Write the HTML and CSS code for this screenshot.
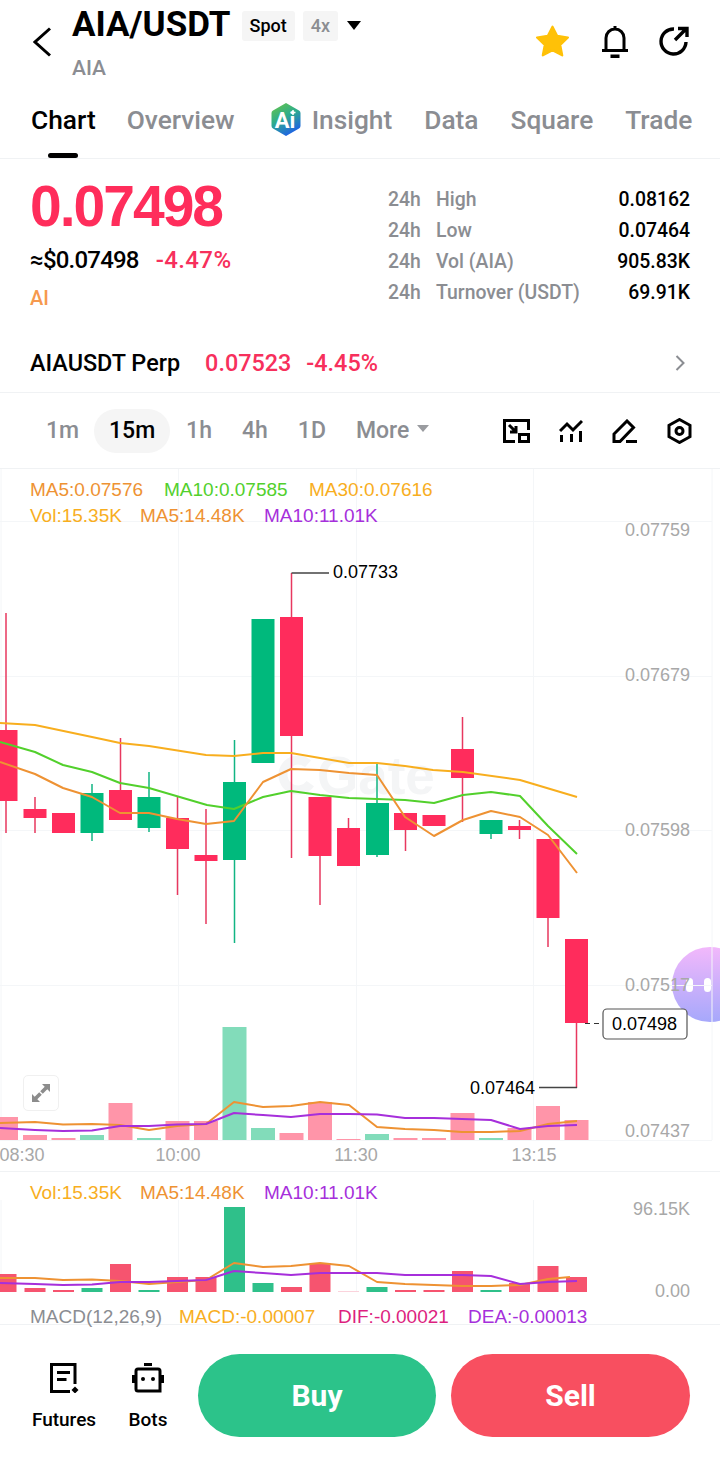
FILE: index.html
```html
<!DOCTYPE html>
<html lang="en">

<head>
  <meta charset="UTF-8">
  <meta name="viewport" content="width=device-width, initial-scale=1.0">
  <title>AIA/USDT</title>
  <link rel="stylesheet" href="styles.css">
</head>

<body>
  <div class="page">
    <header class="top">
      <svg class="back" width="20" height="30" viewBox="0 0 20 30"><path d="M17 1.500 2 15l15 13.500" /></svg>
      <div class="pair">
        <div class="pair-row">
          <h1>AIA/USDT</h1>
          <span class="tag">Spot</span>
          <span class="tag tag-grey">4x</span>
          <span class="caret"></span>
        </div>
        <div class="pair-sub">AIA</div>
      </div>
      <div class="top-icons">
        <svg class="star-icon" width="33" height="32" viewBox="2 1.500 30 29"><path class="star" d="M17 3 21.300 11.400 31 12.800 24 19.500 25.800 29 17 24.500 8.200 29 10 19.500 3 12.800 12.700 11.400Z" /></svg>
        <svg class="ico" width="28" height="33" viewBox="0 0 28 33"><path d="M14 1v3M5 25V13a9 9 0 0 1 18 0v12M1 25.500h26" /><path class="solid" d="M9.500 29.500h9V33h-9z" /></svg>
        <svg class="ico ico-share" width="30" height="30" viewBox="0 0 30 30"><path d="M15 3A12.500 12.500 0 1 0 27 16M16 14 27 3M19 2.500h9V11" /></svg>
      </div>
    </header>

    <nav class="tabs">
      <a class="tab active" href="#">Chart</a>
      <a class="tab" href="#">Overview</a>
      <a class="tab tab-insight" href="#">
        <svg width="32" height="35" viewBox="0 0 32 35">
          <defs>
            <linearGradient id="hex" x1="0" y1="0" x2="0.500" y2="1">
              <stop offset="0" stop-color="#6cc644" />
              <stop offset="0.500" stop-color="#2fae8a" />
              <stop offset="1" stop-color="#1f66e0" />
            </linearGradient>
          </defs>
          <path fill="url(#hex)" d="M16 1 29 8.500a3 3 0 0 1 1.500 2.500v13a3 3 0 0 1-1.500 2.500L16 34 3 26.500A3 3 0 0 1 1.500 24V11A3 3 0 0 1 3 8.500Z" />
          <text class="hex-text" x="15" y="26">Ai</text>
          <path class="hex-plus" d="M23 8v5M20.500 10.500h5" />
        </svg>
        Insight
      </a>
      <a class="tab" href="#">Data</a>
      <a class="tab" href="#">Square</a>
      <a class="tab" href="#">Trade</a>
    </nav>

    <section class="stats">
      <div class="stats-left">
        <div class="price">0.07498</div>
        <div class="price-sub"><span class="usd">≈$0.07498</span><span class="red">-4.47%</span></div>
        <div class="sector">AI</div>
      </div>
      <div class="stats-right">
        <span class="k">24h</span><span class="k">High</span><span class="v">0.08162</span>
        <span class="k">24h</span><span class="k">Low</span><span class="v">0.07464</span>
        <span class="k">24h</span><span class="k">Vol (AIA)</span><span class="v">905.83K</span>
        <span class="k">24h</span><span class="k">Turnover (USDT)</span><span class="v">69.91K</span>
      </div>
    </section>

    <section class="perp">
      <span class="perp-name">AIAUSDT Perp</span>
      <span class="red perp-price">0.07523</span>
      <span class="red">-4.45%</span>
      <svg class="perp-arrow" width="10" height="16" viewBox="0 0 10 16"><path d="M1.500 1 8.500 8l-7 7" /></svg>
    </section>

    <section class="frames">
      <span class="frame">1m</span>
      <span class="frame selected">15m</span>
      <span class="frame">1h</span>
      <span class="frame">4h</span>
      <span class="frame">1D</span>
      <span class="frame frame-more">More<i class="more-caret"></i></span>
      <div class="tools">
        <svg class="ico" width="27" height="24" viewBox="0 0 27 24"><path d="M12 22.500H1.500v-21h24V11M6 6l7 7M13 7v6H7" /><path d="M16.500 15.500h9v7h-9z" /></svg>
        <svg class="ico" width="24" height="24" viewBox="0 0 24 24"><path d="M1 12 8 5l6 6 9-9M2.500 16v7M12.500 15v8M21.500 12v11" /></svg>
        <svg class="ico" width="26" height="24" viewBox="0 0 26 24"><path d="M2 22.500V15L15 2l6.500 6.500-13.500 14ZM14 22.500h11" /></svg>
        <svg class="ico" width="25" height="26" viewBox="0 0 25 26"><path d="M12.500 1.500 23 7.300v11.400l-10.500 5.800L2 18.700V7.300Z" /><circle cx="12.500" cy="13" r="3.500" /></svg>
      </div>
    </section>

    <section class="chart">
      <svg class="plot" width="720" height="703" viewBox="0 469 720 703">
        <path class="grid" d="M0 521.500H712M0 676.500H712M0 830.500H712M0 985.500H712M0 1140.500H712M1 469V1140M178.500 469V1140M356.500 469V1140M533.500 469V1140M712 469V1140" />
        <circle class="watermark-c" cx="298" cy="775" r="15" stroke-dasharray="72 22" transform="rotate(35 298 775)" />
        <text class="watermark" x="317" y="794">Gate</text>

        <text class="axis" x="690" y="536">0.07759</text>
        <text class="axis" x="690" y="681">0.07679</text>
        <text class="axis" x="690" y="836">0.07598</text>
        <text class="axis" x="690" y="991">0.07517</text>
        <text class="axis" x="690" y="1137">0.07437</text>

        <path class="bar-pink" d="M-6 1117h24v23h-24zM23 1135h24v5h-24zM51.500 1138h24v2h-24zM108.500 1103h24v37h-24zM165.500 1121h24v19h-24zM194 1121h24v19h-24zM279.500 1133h24v7h-24zM308 1102h24v38h-24zM336.500 1139h24v1h-24zM393.500 1138h24v2h-24zM422 1138h24v2h-24zM450.500 1113h24v27h-24zM507.500 1128h24v12h-24zM536 1106h24v34h-24zM564.500 1120h24v20h-24z" />
        <path class="bar-mint" d="M80 1135h24v5h-24zM137 1138h24v2h-24zM222.500 1027h24v113h-24zM251 1128h24v12h-24zM365 1134h24v6h-24zM479 1138h24v2h-24z" />

        <path class="wick-red" d="M6 613V833M35 797V833M120.500 738V820M177.500 797V895M206 809V924M291.500 573V858M320 797V905M348.500 818V866M405.500 813V851M462.500 717V822M519.500 820V839M548 839V947M576.500 939V1088" />
        <path class="wick-green" d="M92 784V841M149 772V832M234.500 740V943M377 763V857M491 820V839" />
        <path class="body-red" d="M-5.500 730h23v71h-23zM23.500 809h23v9h-23zM52 813h23v20h-23zM109 790h23v30h-23zM166 818h23v31h-23zM194.500 855h23v6h-23zM280 617h23v119h-23zM308.500 797h23v59h-23zM337 828h23v38h-23zM394 813h23v17h-23zM422.500 815h23v11h-23zM451 749h23v29h-23zM508 826h23v4h-23zM536.500 839h23v79h-23zM565 939h23v84h-23z" />
        <path class="body-green" d="M80.500 793h23v40h-23zM137.500 797h23v31h-23zM223 782h23v78h-23zM251.500 619h23v144h-23zM366 803h23v52h-23zM479.500 820h23v14h-23z" />

        <polyline class="ma ma-yellow" points="0,723 35,725 92,737 120,743 149,746 206,755 234,756 263,753 291,753 349,763 377,763 405,766 433,770 463,772 520,780 577,797" />
        <polyline class="ma ma-green" points="0,742 35,752 63,765 92,772 120,783 149,788 207,805 234,809 263,797 291,791 320,795 349,798 377,799 405,800 434,803 463,795 491,792 520,796 548,826 577,854" />
        <polyline class="ma ma-orange" points="0,762 35,774 63,788 92,797 120,813 149,813 177,819 206,824 234,821 263,782 291,769 320,770 349,773 377,775 405,817 434,836 463,820 491,811 520,817 548,835 577,873" />
        <polyline class="ma ma-orange" points="0,1123 35,1122 63,1124.500 92,1124 120,1125 149,1130 177,1126 206,1124 234,1102 263,1107 291,1106 320,1102 349,1105 377,1127 405,1129 434,1130 462,1132 491,1132 520,1131 548,1124 577,1121" />
        <polyline class="ma ma-purple" points="0,1128 35,1130 63,1131 92,1130.500 120,1126 149,1126 177,1124.500 206,1124 234,1113 263,1115 291,1117 320,1114 349,1114 377,1114.500 405,1118 434,1118 462,1119 491,1120 520,1129 548,1126 577,1125" />

        <text class="lg c-orange" x="30" y="496">MA5:0.07576</text>
        <text class="lg c-green" x="164" y="496">MA10:0.07585</text>
        <text class="lg c-yellow" x="309" y="496">MA30:0.07616</text>
        <text class="lg c-yellow" x="30" y="522">Vol:15.35K</text>
        <text class="lg c-orange" x="140" y="522">MA5:14.48K</text>
        <text class="lg c-purple" x="264" y="522">MA10:11.01K</text>

        <path class="leader" d="M291.500 573H329M539 1087.500H577" />
        <text class="mark" x="333" y="578">0.07733</text>
        <text class="mark" x="470" y="1094">0.07464</text>
        <path class="dash" d="M585 1023.500H601" />
        <rect class="last-box" x="603" y="1009" width="84" height="30" rx="4" />
        <text class="mark" x="612" y="1030">0.07498</text>

        <text class="time" x="22" y="1161">08:30</text>
        <text class="time" x="178" y="1161">10:00</text>
        <text class="time" x="356" y="1161">11:30</text>
        <text class="time" x="534" y="1161">13:15</text>
      </svg>

      <button class="expand">
        <svg width="20" height="20" viewBox="0 0 20 20"><path d="M11 1h8v8L16.300 6.300 11.800 10.800 9.200 8.200 13.700 3.700ZM9 19H1v-8L3.700 13.700 8.200 9.200 10.800 11.800 6.300 16.300Z" /></svg>
      </button>
      <div class="bubble"><i></i><i></i></div>
    </section>

    <section class="volume">
      <svg class="plot" width="720" height="152" viewBox="0 1172 720 152">
        <path class="grid" d="M178.500 1200V1292M356.500 1200V1292M533.500 1200V1292M1 1200V1292" />
        <path class="vol-red" d="M-4.500 1274h21v18h-21zM24.500 1288h21v4h-21zM53 1290h21v2h-21zM110 1264h21v28h-21zM167 1277h21v15h-21zM195.500 1277h21v15h-21zM281 1287h21v5h-21zM309.500 1263h21v29h-21zM395 1290h21v2h-21zM423.500 1290h21v2h-21zM452 1271h21v21h-21zM509 1283h21v9h-21zM537.500 1266h21v26h-21zM566 1277h21v15h-21z" />
        <path class="vol-pale" d="M338 1291h21v1h-21z" />
        <path class="vol-green" d="M81.500 1288h21v4h-21zM138.500 1290h21v2h-21zM224 1207h21v85h-21zM252.500 1283h21v9h-21zM366.500 1287h21v5h-21zM480.500 1290h21v2h-21z" />
        <polyline class="ma ma-orange" points="0,1278 35,1278 63,1280 92,1279.500 120,1281 149,1284 177,1282 206,1280 234,1263 263,1267 291,1266 320,1263 349,1266 377,1282 405,1284 434,1285 462,1286 491,1286 520,1285 548,1279 570,1277" />
        <polyline class="ma ma-purple" points="0,1283 35,1284 63,1285 92,1284.500 120,1282 149,1282 177,1281 206,1280 234,1271 263,1273 291,1275 320,1273 349,1273 377,1273 405,1275 434,1275 462,1275 491,1276 520,1284 548,1282 577,1281" />
        <text class="lg c-yellow" x="30" y="1199">Vol:15.35K</text>
        <text class="lg c-orange" x="140" y="1199">MA5:14.48K</text>
        <text class="lg c-purple" x="264" y="1199">MA10:11.01K</text>
        <text class="axis" x="690" y="1215">96.15K</text>
        <text class="axis" x="690" y="1297">0.00</text>
        <text class="lg c-grey" x="30" y="1323">MACD(12,26,9)</text>
        <text class="lg c-yellow" x="179" y="1323">MACD:-0.00007</text>
        <text class="lg c-pink" x="338" y="1323">DIF:-0.00021</text>
        <text class="lg c-purple" x="468" y="1323">DEA:-0.00013</text>
      </svg>
    </section>

    <footer class="bottom">
      <a class="action action-futures" href="#">
        <svg class="ico" width="29" height="30" viewBox="0 0 29 30"><path d="M25 21V1.500H1.500v27H20M7 9.500h13M7 16.500h9.500" /><path class="solid" d="M25 23.500l3.500 3.500-3.500 3.500-3.500-3.500z" /></svg>
        <span>Futures</span>
      </a>
      <a class="action action-bots" href="#">
        <svg class="ico" width="32" height="30" viewBox="0 0 32 30"><path class="solid" d="M12 0h8v3h-8zM0 12h3v8H0zM29 12h3v8h-3z" /><path d="M4 8a2 2 0 0 1 2-2h20a2 2 0 0 1 2 2v20H6a2 2 0 0 1-2-2Z" /><circle class="solid" cx="11" cy="16" r="2" /><circle class="solid" cx="21" cy="16" r="2" /></svg>
        <span>Bots</span>
      </a>
      <button class="trade buy">Buy</button>
      <button class="trade sell">Sell</button>
    </footer>
  </div>
</body>

</html>
```
FILE: styles.css
```css
body {
  margin: 0;
  background: #fff;
  color: #000;
  font-family: Roboto, "Liberation Sans", sans-serif;
}

.page {
  position: relative;
  width: 720px;
  height: 1467px;
  overflow: hidden;
}

.red {
  color: #f7305c;
}

.ico {
  fill: none;
  stroke: #000;
  stroke-width: 3;
}

.ico .solid {
  fill: #000;
  stroke: none;
}

/* header */
.top {
  display: flex;
  height: 100px;
  box-sizing: border-box;
  padding: 9px 31px 0 33px;
}

.back {
  margin: 18px 19px 0 0;
  fill: none;
  stroke: #000;
  stroke-width: 3;
}

.pair-row {
  display: flex;
  align-items: flex-start;
  height: 32px;
}

.pair-row h1 {
  margin: 0 11px 0 0;
  font-size: 35px;
  line-height: 32px;
  font-weight: 700;
}

.tag {
  height: 30px;
  margin: 2px 8px 0 0;
  padding: 0 8px;
  border-radius: 3px;
  background: #f5f5f5;
  font-size: 18px;
  line-height: 30px;
  font-weight: 500;
}

.tag-grey {
  color: #8b8d92;
  margin-right: 9px;
}

.caret {
  margin-top: 12px;
  border-top: 9px solid #000;
  border-left: 7px solid transparent;
  border-right: 7px solid transparent;
}

.pair-sub {
  margin-top: 12px;
  color: #8b8d92;
  font-size: 21px;
  line-height: 30px;
  font-weight: 500;
}

.top-icons {
  display: flex;
  align-items: center;
  gap: 30px;
  height: 50px;
  margin: 7px 0 0 auto;
}

.star-icon {
  margin-right: 2px;
}

.ico-share {
  stroke-width: 3.400;
}

.star {
  fill: #ffc107;
  stroke: #ffc107;
  stroke-width: 2;
  stroke-linejoin: round;
}

/* tabs */
.tabs {
  display: flex;
  align-items: center;
  gap: 32px;
  height: 59px;
  box-sizing: border-box;
  padding: 0 0 19px 31px;
  border-bottom: 1px solid #f0f2f4;
}

.tab {
  position: relative;
  color: #8b8d92;
  font-size: 26.300px;
  font-weight: 500;
  text-decoration: none;
}

.tab.active {
  margin-right: -1px;
  color: #000;
}

.tab.active::after {
  content: "";
  position: absolute;
  left: 17px;
  bottom: -23px;
  width: 30px;
  height: 5px;
  border-radius: 3px;
  background: #000;
}

.tab-insight {
  display: flex;
  align-items: center;
  gap: 10px;
  margin-left: 3px;
}

.hex-text {
  fill: #fff;
  font-size: 22px;
  font-weight: 700;
  text-anchor: middle;
}

.hex-plus {
  fill: none;
  stroke: #fff;
  stroke-width: 1.500;
}

/* price block */
.stats {
  display: flex;
  justify-content: space-between;
  height: 175px;
  box-sizing: border-box;
  padding: 25px 30px 0;
}

.price {
  color: #ff2d5b;
  font-family: "Liberation Sans", sans-serif;
  font-size: 57px;
  line-height: 44px;
  font-weight: 700;
  letter-spacing: -2px;
}

.price-sub {
  display: flex;
  gap: 17px;
  margin-top: 17px;
  font-size: 24px;
  line-height: 30px;
  font-weight: 500;
}

.usd {
  letter-spacing: -0.800px;
}

.price-sub .red {
  letter-spacing: 0.400px;
}

.sector {
  margin-top: 11px;
  color: #f6994e;
  font-size: 20px;
  line-height: 24px;
  font-weight: 500;
}

.stats-right {
  display: grid;
  grid-template-columns: 48px 164px 1fr;
  grid-auto-rows: 31px;
  width: 302px;
  font-size: 19.400px;
  line-height: 31px;
  font-weight: 500;
}

.k {
  color: #8b8d92;
}

.v {
  text-align: right;
}

/* perp row */
.perp {
  display: flex;
  align-items: center;
  height: 59px;
  box-sizing: border-box;
  padding: 0 35px 0 30px;
  border-bottom: 1px solid #f0f2f4;
  font-size: 23.400px;
  font-weight: 500;
}

.perp-name {
  margin-right: 25px;
}

.perp-price {
  margin-right: 15px;
}

.perp-arrow {
  margin-left: auto;
  fill: none;
  stroke: #8b8d92;
  stroke-width: 2;
}

/* timeframes */
.frames {
  display: flex;
  align-items: center;
  height: 76px;
  box-sizing: border-box;
  padding: 0 28px 0 46px;
  border-bottom: 1px solid #f0f2f4;
  color: #8b8d92;
  font-size: 23px;
  font-weight: 500;
}

.frame {
  margin-right: 30px;
}

.frame:first-child {
  margin-right: 15px;
}

.frame.selected {
  width: 76px;
  height: 44px;
  margin-right: 16px;
  border-radius: 22px;
  background: #f5f5f5;
  color: #000;
  line-height: 44px;
  text-align: center;
}

.frame-more {
  display: flex;
  align-items: center;
  margin: 0;
}

.more-caret {
  margin: 0 0 4px 8px;
  border-top: 7px solid #9a9ca0;
  border-left: 6px solid transparent;
  border-right: 6px solid transparent;
}

.tools {
  display: flex;
  align-items: center;
  gap: 29px;
  margin-left: auto;
}

/* chart */
.chart {
  position: relative;
  height: 703px;
  border-bottom: 1px solid #f0f2f4;
  box-sizing: border-box;
}

.plot {
  position: relative;
  z-index: 1;
  display: block;
  overflow: visible;
  font-family: "Liberation Sans", sans-serif;
}

.grid {
  fill: none;
  stroke: #f4f6f8;
  stroke-width: 1;
}

.watermark {
  fill: #f4f5f6;
  font-size: 53px;
  font-weight: 700;
}

.watermark-c {
  fill: none;
  stroke: #f4f5f6;
  stroke-width: 9;
}

.axis {
  fill: #a8a8a8;
  font-size: 18px;
  text-anchor: end;
}

.time {
  fill: #a8a8a8;
  font-size: 18px;
  text-anchor: middle;
}

.lg {
  font-size: 19px;
}

.c-orange { fill: #ee9233; }
.c-green { fill: #52d02c; }
.c-yellow { fill: #f8ae1e; }
.c-purple { fill: #a62fdb; }
.c-grey { fill: #8b8d92; }
.c-pink { fill: #dd1f7f; }

.body-red { fill: #ff2c5c; }
.body-green { fill: #00b97c; }
.bar-pink { fill: #ff95a9; }
.bar-mint { fill: #82dcba; }
.vol-red { fill: #f6546f; }
.vol-pale { fill: #fbd3dc; }
.vol-green { fill: #2fc08a; }

.wick-red,
.wick-green {
  fill: none;
  stroke-width: 1.500;
}

.wick-red { stroke: #e8385f; }
.wick-green { stroke: #12b583; }

.ma {
  fill: none;
  stroke-width: 2;
  stroke-linejoin: round;
}

.ma-yellow { stroke: #f8ae1e; }
.ma-green { stroke: #52d02c; }
.ma-orange { stroke: #ee9233; }
.ma-purple { stroke: #a62fdb; }

.leader {
  fill: none;
  stroke: #444;
  stroke-width: 1.500;
}

.dash {
  fill: none;
  stroke: #333;
  stroke-width: 1;
  stroke-dasharray: 5 4;
}

.last-box {
  fill: #fff;
  stroke: #555;
  stroke-width: 1.200;
}

.mark {
  fill: #000;
  font-size: 18px;
}

.expand {
  position: absolute;
  z-index: 2;
  left: 23px;
  top: 606px;
  display: flex;
  align-items: center;
  justify-content: center;
  width: 36px;
  height: 36px;
  padding: 0;
  border: 1.500px solid #f0f0f0;
  border-radius: 5px;
  background: #fff;
}

.expand svg {
  fill: #8c8c8c;
}

.bubble {
  position: absolute;
  left: 672px;
  top: 478px;
  display: flex;
  align-items: center;
  gap: 11px;
  width: 76px;
  height: 75px;
  box-sizing: border-box;
  padding-left: 14px;
  border-radius: 50%;
  background: linear-gradient(#f2b8fb, #a6a8fb);
}

.bubble i {
  width: 7px;
  height: 14px;
  border-radius: 4px;
  background: #fff;
}

/* volume panel */
.volume {
  height: 153px;
  border-bottom: 1px solid #f0f2f4;
  box-sizing: border-box;
}

/* bottom actions */
.bottom {
  display: flex;
  align-items: flex-start;
  box-sizing: border-box;
  height: 142px;
  padding-top: 29px;
}

.action {
  display: flex;
  flex-direction: column;
  align-items: center;
  gap: 15px;
  margin-top: 9px;
  color: #000;
  font-size: 19px;
  line-height: 24px;
  font-weight: 500;
  text-decoration: none;
}

.action-futures {
  width: 66px;
  margin-left: 31px;
}

.action-bots {
  width: 40px;
  margin-left: 31px;
}

.trade {
  height: 83px;
  border: 0;
  border-radius: 42px;
  color: #fff;
  font-family: Roboto, sans-serif;
  font-size: 30px;
  font-weight: 700;
}

.buy {
  width: 238px;
  margin-left: 30px;
  background: #2cc38a;
}

.sell {
  width: 239px;
  margin-left: 15px;
  background: #f84f60;
}
```
